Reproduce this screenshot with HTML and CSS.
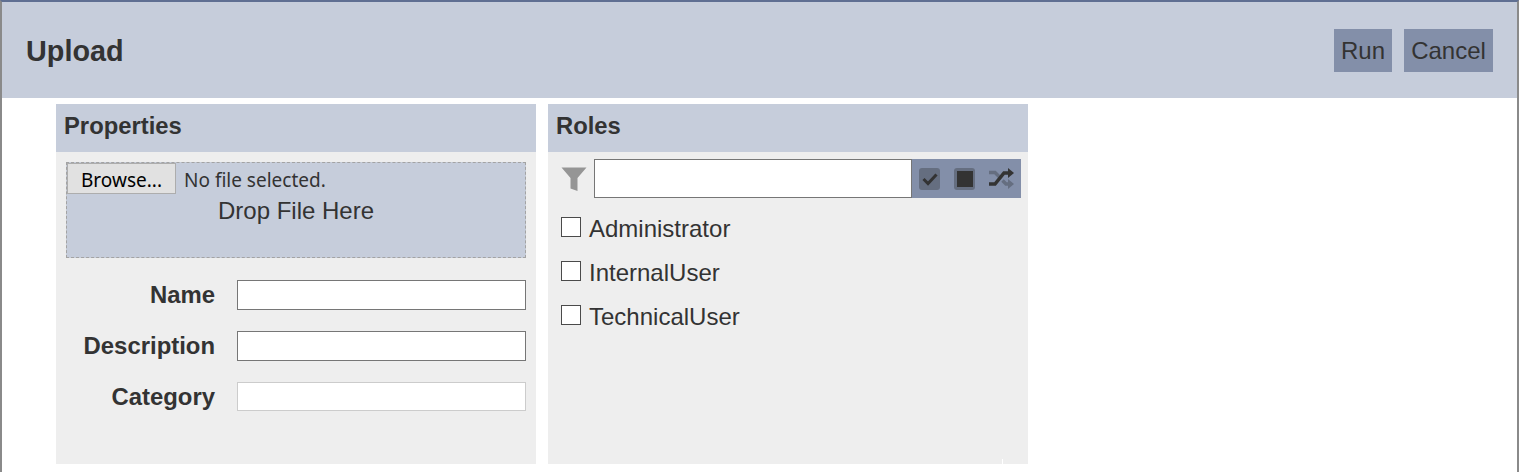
FILE: index.html
```html
<!DOCTYPE html>
<html lang="en">
<head>
    <meta charset="UTF-8">
    <title>Upload</title>
    <link rel="stylesheet" href="styles.css">
</head>
<body>
    <div class="page">
        <header class="page-head">
            <h1>Upload</h1>
            <div class="actions">
                <button class="action" type="button">Run</button>
                <button class="action" type="button">Cancel</button>
            </div>
        </header>

        <div class="panels">
            <section class="panel">
                <h2 class="panel-title">Properties</h2>
                <div class="panel-body props-body">
                    <div class="dropzone">
                        <div class="file-row">
                            <button class="browse" type="button">Browse...</button>
                            <span class="file-status">No file selected.</span>
                        </div>
                        <div class="drop-text">Drop File Here</div>
                    </div>
                    <div class="form-row">
                        <label class="form-label">Name</label>
                        <input class="form-input" type="text">
                    </div>
                    <div class="form-row">
                        <label class="form-label">Description</label>
                        <input class="form-input" type="text">
                    </div>
                    <div class="form-row">
                        <label class="form-label">Category</label>
                        <input class="form-input disabled" type="text">
                    </div>
                </div>
            </section>

            <section class="panel">
                <h2 class="panel-title">Roles</h2>
                <div class="panel-body roles-body">
                    <div class="filter-row">
                        <svg class="filter-icon" width="26" height="24" viewBox="0 0 26 24">
                            <path d="M0.500 0.500H25.500L16.500 11V24L9.500 21.500V11Z" fill="#959595"/>
                        </svg>
                        <input class="filter-input" type="text">
                        <div class="filter-tools">
                            <span class="tool-box">
                                <svg width="16" height="14" viewBox="0 0 16 14">
                                    <path d="M1.500 7L6 11.500L14.500 2.500" fill="none" stroke="#333" stroke-width="3"/>
                                </svg>
                            </span>
                            <span class="tool-box">
                                <span class="tool-stop"></span>
                            </span>
                            <svg class="tool-shuffle" width="25" height="21" viewBox="0 0 25 21">
                                <path d="M0 4.500H6L10.500 9M13.500 12.500L17 16H20" fill="none" stroke="#656e80" stroke-width="3.500"/>
                                <path d="M19 11L25 16L19 21Z" fill="#656e80"/>
                                <path d="M0 16H6L15 5H20" fill="none" stroke="#333" stroke-width="3.500"/>
                                <path d="M19 0L25 5L19 10Z" fill="#333"/>
                            </svg>
                        </div>
                    </div>
                    <ul class="role-list">
                        <li class="role"><span class="check"></span>Administrator</li>
                        <li class="role"><span class="check"></span>InternalUser</li>
                        <li class="role"><span class="check"></span>TechnicalUser</li>
                    </ul>
                </div>
            </section>
        </div>
    </div>
</body>
</html>
```

FILE: styles.css
```css
* {
    margin: 0;
    padding: 0;
    box-sizing: border-box;
}

html, body {
    height: 100%;
    overflow: hidden;
}

body {
    font-family: "Liberation Sans", Arial, sans-serif;
    color: #333;
    background: #fff;
}

.page {
    height: 100%;
    border-top: 2px solid #5f6f92;
    border-left: 2px solid #8a8a8a;
    border-right: 2px solid #8a8a8a;
}

/* Top bar */
.page-head {
    height: 96px;
    background: #c6cddb;
    display: flex;
    align-items: center;
    justify-content: space-between;
    padding: 0 24px;
}

.page-head h1 {
    padding-top: 2px;
    font-size: 28.800px;
    font-weight: bold;
}

.actions {
    display: flex;
    gap: 12px;
}

.action {
    height: 43px;
    padding: 2px 7.100px 0;
    border: none;
    background: #838fa9;
    color: #333;
    font-family: inherit;
    font-size: 24px;
}

/* Panels */
.panels {
    display: flex;
    gap: 12px;
    padding: 6px 0 0 54px;
}

.panel {
    width: 480px;
}

.panel-title {
    height: 48px;
    line-height: 44px;
    padding-left: 8px;
    background: #c6cddb;
    font-size: 23.800px;
    font-weight: bold;
}

.panel-body {
    position: relative;
    height: 312px;
    background: #eee;
}

/* Properties */
.props-body {
    padding: 10px 10px 0;
}

.dropzone {
    height: 96px;
    margin-bottom: 22px;
    background: #c6cddb;
    border: 1px dashed #a3a3a3;
}

.file-row {
    display: flex;
    align-items: center;
    height: 31px;
}

.browse {
    width: 109px;
    height: 31px;
    padding-top: 2px;
    background: #e1e1e1;
    border: 1px solid #adadad;
    color: #000;
    font-family: "Noto Sans", sans-serif;
    font-size: 19px;
}

.file-status {
    margin: 2px 0 0 8px;
    font-family: "Noto Sans", sans-serif;
    font-size: 19px;
}

.drop-text {
    margin-top: 3px;
    text-align: center;
    font-size: 24px;
}

.form-row {
    display: flex;
    align-items: center;
    height: 30px;
    margin-bottom: 21px;
}

.form-label {
    width: 149px;
    margin-right: 22px;
    text-align: right;
    font-size: 23.900px;
    font-weight: bold;
}

.form-input {
    align-self: flex-start;
    width: 289px;
    height: 30px;
    background: #fff;
    border: 1px solid #767676;
}

.form-input.disabled {
    height: 29px;
    border-color: #ccc;
}

/* Roles */
.roles-body {
    padding: 7px 7px 0 0;
}

.roles-body::after {
    content: "";
    position: absolute;
    left: 454px;
    bottom: 0;
    width: 1px;
    height: 5px;
    background: #fff;
}

.filter-row {
    display: flex;
    align-items: center;
    height: 39px;
}

.filter-icon {
    margin: 0 7px 0 13px;
}

.filter-input {
    flex: 1;
    min-width: 0;
    height: 39px;
    background: #fff;
    border: 1px solid #767676;
}

.filter-tools {
    display: flex;
    align-items: center;
    gap: 14px;
    width: 109px;
    height: 39px;
    padding-left: 7px;
    background: #838fa9;
}

.tool-box {
    display: flex;
    align-items: center;
    justify-content: center;
    width: 21px;
    height: 22px;
    background: #656e80;
    border-radius: 3px;
}

.tool-stop {
    width: 16px;
    height: 16px;
    background: #333;
}

.role-list {
    list-style: none;
    margin-top: 9px;
}

.role {
    display: flex;
    align-items: center;
    height: 44px;
    padding-left: 13px;
    font-size: 24px;
}

.check {
    width: 20px;
    height: 20px;
    margin: -4px 8px 0 0;
    background: #fff;
    border: 1px solid #4a4a4a;
}
```
